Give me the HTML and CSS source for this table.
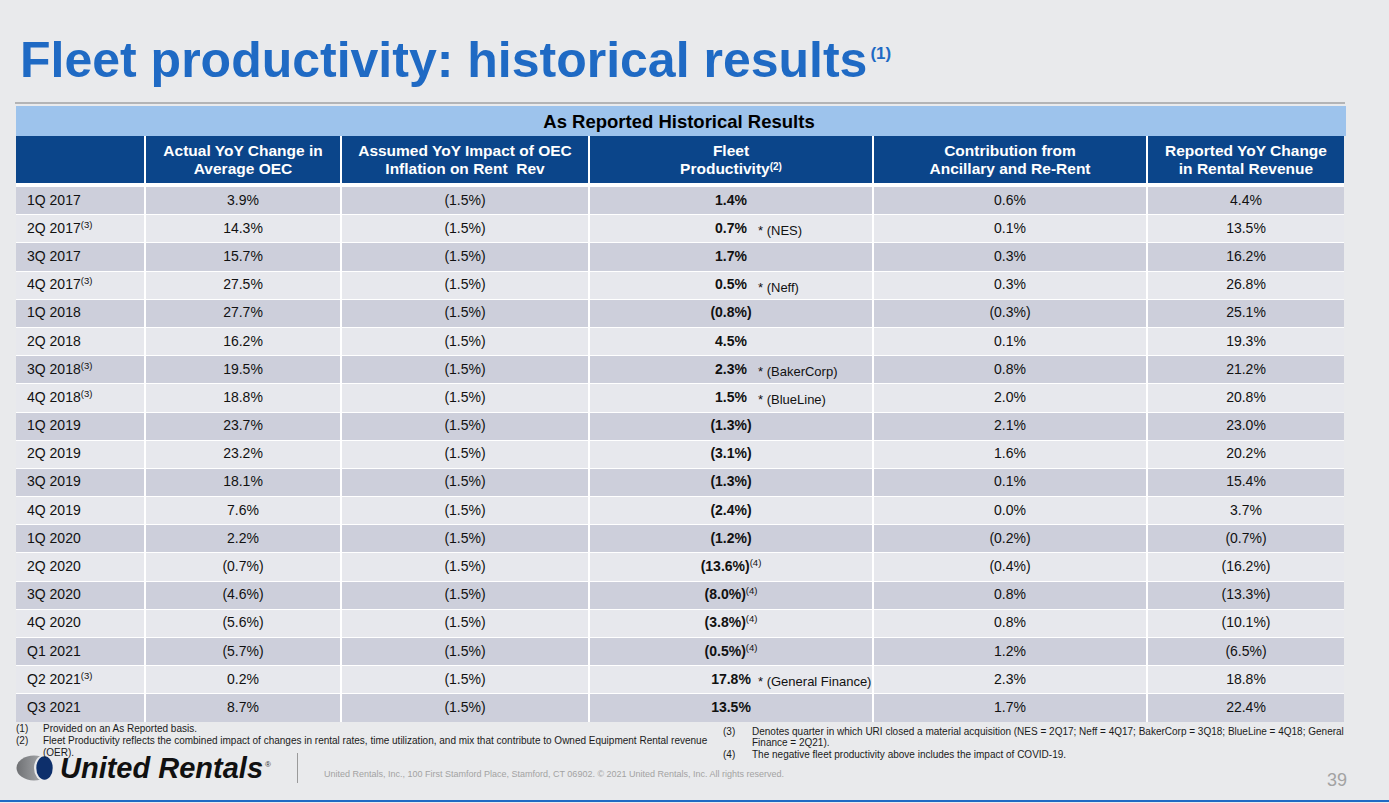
FILE: index.html
```html
<!DOCTYPE html>
<html lang="en">
<head>
<meta charset="utf-8">
<title>Fleet productivity: historical results</title>
<link rel="stylesheet" href="styles.css">
</head>
<body>
<div class="slide">
  <h1 class="title">Fleet productivity: historical results<sup class="title-sup">(1)</sup></h1>
  <div class="rule"></div>
  <div class="band">As Reported Historical Results</div>
  <div class="grid">
    <div class="hd"></div>
    <div class="hd"><span>Actual YoY Change in<br>Average OEC</span></div>
    <div class="hd"><span>Assumed YoY Impact of OEC<br>Inflation on Rent&nbsp; Rev</span></div>
    <div class="hd"><span>Fleet<br>Productivity<sup class="hsup">(2)</sup></span></div>
    <div class="hd"><span>Contribution from<br>Ancillary and Re-Rent</span></div>
    <div class="hd"><span>Reported YoY Change<br>in Rental Revenue</span></div>

    <div class="r"><div class="c q"><span>1Q 2017</span></div><div class="c">3.9%</div><div class="c">(1.5%)</div><div class="c f"><span><b>1.4%</b></span></div><div class="c">0.6%</div><div class="c">4.4%</div></div>
    <div class="r"><div class="c q"><span>2Q 2017<sup>(3)</sup></span></div><div class="c">14.3%</div><div class="c">(1.5%)</div><div class="c f"><span><b>0.7%</b></span><span class="note">* (NES)</span></div><div class="c">0.1%</div><div class="c">13.5%</div></div>
    <div class="r"><div class="c q"><span>3Q 2017</span></div><div class="c">15.7%</div><div class="c">(1.5%)</div><div class="c f"><span><b>1.7%</b></span></div><div class="c">0.3%</div><div class="c">16.2%</div></div>
    <div class="r"><div class="c q"><span>4Q 2017<sup>(3)</sup></span></div><div class="c">27.5%</div><div class="c">(1.5%)</div><div class="c f"><span><b>0.5%</b></span><span class="note">* (Neff)</span></div><div class="c">0.3%</div><div class="c">26.8%</div></div>
    <div class="r"><div class="c q"><span>1Q 2018</span></div><div class="c">27.7%</div><div class="c">(1.5%)</div><div class="c f"><span><b>(0.8%)</b></span></div><div class="c">(0.3%)</div><div class="c">25.1%</div></div>
    <div class="r"><div class="c q"><span>2Q 2018</span></div><div class="c">16.2%</div><div class="c">(1.5%)</div><div class="c f"><span><b>4.5%</b></span></div><div class="c">0.1%</div><div class="c">19.3%</div></div>
    <div class="r"><div class="c q"><span>3Q 2018<sup>(3)</sup></span></div><div class="c">19.5%</div><div class="c">(1.5%)</div><div class="c f"><span><b>2.3%</b></span><span class="note">* (BakerCorp)</span></div><div class="c">0.8%</div><div class="c">21.2%</div></div>
    <div class="r"><div class="c q"><span>4Q 2018<sup>(3)</sup></span></div><div class="c">18.8%</div><div class="c">(1.5%)</div><div class="c f"><span><b>1.5%</b></span><span class="note">* (BlueLine)</span></div><div class="c">2.0%</div><div class="c">20.8%</div></div>
    <div class="r"><div class="c q"><span>1Q 2019</span></div><div class="c">23.7%</div><div class="c">(1.5%)</div><div class="c f"><span><b>(1.3%)</b></span></div><div class="c">2.1%</div><div class="c">23.0%</div></div>
    <div class="r"><div class="c q"><span>2Q 2019</span></div><div class="c">23.2%</div><div class="c">(1.5%)</div><div class="c f"><span><b>(3.1%)</b></span></div><div class="c">1.6%</div><div class="c">20.2%</div></div>
    <div class="r"><div class="c q"><span>3Q 2019</span></div><div class="c">18.1%</div><div class="c">(1.5%)</div><div class="c f"><span><b>(1.3%)</b></span></div><div class="c">0.1%</div><div class="c">15.4%</div></div>
    <div class="r"><div class="c q"><span>4Q 2019</span></div><div class="c">7.6%</div><div class="c">(1.5%)</div><div class="c f"><span><b>(2.4%)</b></span></div><div class="c">0.0%</div><div class="c">3.7%</div></div>
    <div class="r"><div class="c q"><span>1Q 2020</span></div><div class="c">2.2%</div><div class="c">(1.5%)</div><div class="c f"><span><b>(1.2%)</b></span></div><div class="c">(0.2%)</div><div class="c">(0.7%)</div></div>
    <div class="r"><div class="c q"><span>2Q 2020</span></div><div class="c">(0.7%)</div><div class="c">(1.5%)</div><div class="c f"><span><b>(13.6%)</b><sup>(4)</sup></span></div><div class="c">(0.4%)</div><div class="c">(16.2%)</div></div>
    <div class="r"><div class="c q"><span>3Q 2020</span></div><div class="c">(4.6%)</div><div class="c">(1.5%)</div><div class="c f"><span><b>(8.0%)</b><sup>(4)</sup></span></div><div class="c">0.8%</div><div class="c">(13.3%)</div></div>
    <div class="r"><div class="c q"><span>4Q 2020</span></div><div class="c">(5.6%)</div><div class="c">(1.5%)</div><div class="c f"><span><b>(3.8%)</b><sup>(4)</sup></span></div><div class="c">0.8%</div><div class="c">(10.1%)</div></div>
    <div class="r"><div class="c q"><span>Q1 2021</span></div><div class="c">(5.7%)</div><div class="c">(1.5%)</div><div class="c f"><span><b>(0.5%)</b><sup>(4)</sup></span></div><div class="c">1.2%</div><div class="c">(6.5%)</div></div>
    <div class="r"><div class="c q"><span>Q2 2021<sup>(3)</sup></span></div><div class="c">0.2%</div><div class="c">(1.5%)</div><div class="c f"><span><b>17.8%</b></span><span class="note">* (General Finance)</span></div><div class="c">2.3%</div><div class="c">18.8%</div></div>
    <div class="r"><div class="c q"><span>Q3 2021</span></div><div class="c">8.7%</div><div class="c">(1.5%)</div><div class="c f"><span><b>13.5%</b></span></div><div class="c">1.7%</div><div class="c">22.4%</div></div>
  </div>

  <div class="notes">
    <div class="notes-left">
      <div class="fn"><span class="fn-n">(1)</span><span class="fn-t">Provided on an As Reported basis.</span></div>
      <div class="fn"><span class="fn-n">(2)</span><span class="fn-t">Fleet Productivity reflects the combined impact of changes in rental rates, time utilization, and mix that contribute to Owned Equipment Rental revenue (OER).</span></div>
    </div>
    <div class="notes-right">
      <div class="fn"><span class="fn-n">(3)</span><span class="fn-t">Denotes quarter in which URI closed a material acquisition (NES = 2Q17; Neff = 4Q17; BakerCorp = 3Q18; BlueLine = 4Q18; General Finance = 2Q21).</span></div>
      <div class="fn"><span class="fn-n">(4)</span><span class="fn-t">The negative fleet productivity above includes the impact of COVID-19.</span></div>
    </div>
  </div>

  <div class="footer">
    <div class="logo">
      <svg class="logo-mark" width="38" height="26" viewBox="0 0 38 26" aria-hidden="true">
        <defs>
          <linearGradient id="gg" x1="0" y1="0" x2="1" y2="0">
            <stop offset="0" stop-color="#6f7174"/>
            <stop offset="1" stop-color="#b9bbbe"/>
          </linearGradient>
        </defs>
        <ellipse cx="18" cy="13" rx="17.5" ry="12.5" fill="url(#gg)"/>
        <ellipse cx="28" cy="13" rx="10" ry="13" fill="#e9eaec"/>
        <ellipse cx="28.5" cy="13" rx="8.2" ry="11.8" fill="#0d2f6b"/>
      </svg>
      <span class="logo-text">United Rentals</span><span class="reg">®</span>
    </div>
    <div class="vsep"></div>
    <div class="copy">United Rentals, Inc., 100 First Stamford Place, Stamford, CT 06902. © 2021 United Rentals, Inc. All rights reserved.</div>
    <div class="page">39</div>
  </div>
  <div class="bottom-line"></div>
</div>
</body>
</html>
```
FILE: styles.css
```css
* { box-sizing: border-box; }
html, body {
  margin: 0;
  padding: 0;
}
body {
  background: #e9eaec;
  font-family: "Liberation Sans", Arial, sans-serif;
  color: #111;
  width: 1389px;
  height: 803px;
  overflow: hidden;
}
.slide {
  width: 1389px;
  height: 803px;
  display: flex;
  flex-direction: column;
}
.title {
  margin: 32px 0 0 0;
  padding-left: 20px;
  font-size: 50px;
  line-height: 56px;
  font-weight: 700;
  color: #1f6ac4;
  white-space: nowrap;
}
.title-sup {
  font-size: 17px;
  vertical-align: 18px;
  line-height: 0;
  margin-left: 3px;
}
.rule {
  margin: 14px 0 0 15px;
  width: 1330px;
  height: 2px;
  background: #b3b4b6;
}
.band {
  margin: 2px 0 0 16px;
  width: 1330px;
  height: 30px;
  background: #9dc3ec;
  color: #000;
  font-weight: 700;
  font-size: 18.5px;
  line-height: 31px;
  text-align: center;
  padding-right: 4px;
}
.grid {
  margin-left: 16px;
  width: 1328px;
  display: grid;
  grid-template-columns: 128px 194px 246px 282px 272px 196px;
  grid-template-rows: 50px repeat(19, 27.2px);
  column-gap: 2px;
  row-gap: 1px;
  background: #fff;
}
.hd {
  height: 47px;
  align-self: start;
  background: #0b458a;
  color: #fff;
  font-weight: 700;
  font-size: 15.5px;
  line-height: 18px;
  text-align: center;
  display: flex;
  align-items: center;
  justify-content: center;
  padding-top: 1px;
}
.hsup {
  font-size: 10px;
  font-weight: 700;
  vertical-align: 4px;
  line-height: 0;
}
.r { display: contents; }
.c {
  font-size: 14px;
  line-height: 16px;
  display: flex;
  align-items: center;
  justify-content: center;
  background: #cdcfdb;
  position: relative;
  color: #111;
  padding-bottom: 2px;
}
.r:nth-of-type(even) .c { background: #e7e8ed; }
.c.q {
  justify-content: flex-start;
  padding-left: 11px;
}
.c sup {
  font-size: 9.5px;
  vertical-align: 5px;
  line-height: 0;
  font-weight: 400;
}
.c.f b { font-weight: 700; }
.note {
  position: absolute;
  left: 168px;
  top: 8px;
  font-size: 13px;
  line-height: 16px;
  white-space: nowrap;
  color: #111;
}
.notes {
  height: 30px;
  display: flex;
  font-size: 10px;
  color: #1a1a1a;
  position: relative;
  z-index: 1;
}
.notes-left {
  width: 707px;
  margin-left: 16px;
  line-height: 12px;
  padding-top: 1px;
}
.notes-right {
  width: 640px;
  line-height: 11.5px;
  padding-top: 4px;
}
.fn { display: flex; }
.fn-n { flex: 0 0 27px; }
.notes-right .fn-n { flex-basis: 29px; }
.notes-left .fn-t { width: 680px; }
.notes-right .fn-t { width: 606px; }
.footer {
  height: 48px;
  display: flex;
  align-items: flex-start;
  padding-left: 16px;
}
.logo {
  display: flex;
  align-items: center;
  height: 30px;
  margin-top: 1px;
}
.logo-mark { display: block; margin-top: 1px; }
.logo-text {
  font-size: 29px;
  font-weight: 700;
  font-style: italic;
  color: #111;
  margin-left: 6px;
  line-height: 30px;
}
.reg {
  font-size: 8px;
  align-self: flex-start;
  margin-top: 7px;
  margin-left: 2px;
  color: #333;
}
.vsep {
  width: 1px;
  height: 30px;
  margin: 1px 0 0 26px;
  background: #9a9a9a;
}
.copy {
  font-size: 9px;
  line-height: 11px;
  margin: 17px 0 0 26px;
  color: #a3a3a3;
  white-space: nowrap;
}
.page {
  margin: 18px 42px 0 auto;
  font-size: 18px;
  line-height: 20px;
  color: #a3a3a3;
}
.bottom-line {
  height: 2px;
  background: #1f6ac4;
}
```
